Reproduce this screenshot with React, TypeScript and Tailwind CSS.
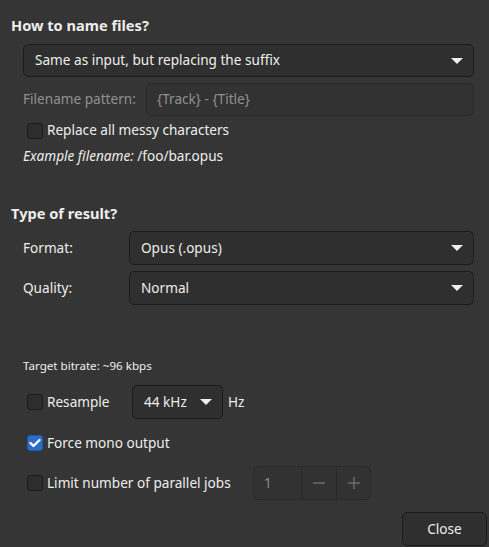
import React from "react";

const Arrow = () => (
  <svg width="12" height="6" viewBox="0 0 12 6" className="shrink-0">
    <path d="M0 0 L12 0 L6 6 Z" fill="#eeeeec" />
  </svg>
);

const Combo = ({ label, className }: { label: string; className: string }) => (
  <div
    className={`flex items-center justify-between rounded-[5px] border border-[#1b1b1b] bg-[#2f2f2f] pl-[11px] pr-[10px] ${className}`}
  >
    <span>{label}</span>
    <Arrow />
  </div>
);

const Check = ({ checked = false }: { checked?: boolean }) =>
  checked ? (
    <div className="flex h-[16px] w-[16px] shrink-0 items-center justify-center rounded-[3px] border border-[#1f5aa6] bg-[#2a6dcc]">
      <svg width="12" height="10" viewBox="0 0 12 10">
        <path d="M1.5 5 L4.5 8 L10.5 2" fill="none" stroke="#ffffff" strokeWidth="2.4" strokeLinecap="round" strokeLinejoin="round" />
      </svg>
    </div>
  ) : (
    <div className="h-[16px] w-[16px] shrink-0 rounded-[3px] border border-[#1b1b1b] bg-[#2d2d2d]" />
  );

export default function App() {
  return (
    <div
      className="relative h-[547px] w-[489px] overflow-hidden bg-[#353535] text-[13.6px] text-[#eeeeec]"
      style={{ fontFamily: '"Noto Sans", sans-serif' }}
    >
      <div className="flex flex-col">
        <div className="ml-[11px] mt-[15px] h-[20px] text-[14.6px] font-bold leading-[20px]">How to name files?</div>

        <Combo label="Same as input, but replacing the suffix" className="ml-[23px] mt-[9px] h-[33px] w-[451px]" />

        <div className="ml-[23px] mt-[6px] flex h-[33px] items-center">
          <span className="w-[123px] text-[#8f918f]">Filename pattern:</span>
          <div className="flex h-[33px] w-[328px] items-center rounded-[5px] border border-[#292929] bg-[#323232] pl-[10px] text-[#8f918f]">
            {"{Track} - {Title}"}
          </div>
        </div>

        <div className="ml-[27px] mt-[4px] flex h-[21px] items-center gap-[4px]">
          <Check />
          <span>Replace all messy characters</span>
        </div>

        <div className="ml-[23px] mt-[5px] h-[20px] leading-[20px]">
          <i>Example filename:</i> /foo/bar.opus
        </div>

        <div className="ml-[11px] mt-[37px] h-[20px] text-[14.6px] font-bold leading-[20px]">Type of result?</div>

        <div className="ml-[23px] mt-[8px] flex h-[34px] items-center">
          <span className="w-[106px]">Format:</span>
          <Combo label="Opus (.opus)" className="h-[34px] w-[345px]" />
        </div>

        <div className="ml-[23px] mt-[6px] flex h-[34px] items-center">
          <span className="w-[106px]">Quality:</span>
          <Combo label="Normal" className="h-[34px] w-[345px]" />
        </div>

        <div className="ml-[23px] mt-[53px] h-[16px] text-[11.6px] leading-[16px]">Target bitrate: ~96 kbps</div>

        <div className="ml-[27px] mt-[11px] flex h-[34px] items-center">
          <Check />
          <span className="ml-[4px] w-[85px]">Resample</span>
          <div className="flex h-[34px] w-[91px] items-center justify-between rounded-[5px] border border-[#1b1b1b] bg-[#2f2f2f] pl-[11px] pr-[10px]">
            <span>44 kHz</span>
            <Arrow />
          </div>
          <span className="ml-[5px]">Hz</span>
        </div>

        <div className="ml-[27px] mt-[14px] flex h-[20px] items-center gap-[4px]">
          <Check checked />
          <span>Force mono output</span>
        </div>

        <div className="ml-[27px] mt-[13px] flex h-[34px] items-center">
          <Check />
          <span className="ml-[4px] w-[206px]">Limit number of parallel jobs</span>
          <div className="flex h-[34px] w-[118px] items-stretch rounded-[5px] border border-[#292929] bg-[#323232] text-[#8a8c8a]">
            <div className="flex w-[47px] items-center pl-[10px]">1</div>
            <div className="flex w-[35px] items-center justify-center border-l border-[#292929]">
              <svg width="16" height="16" viewBox="0 0 16 16">
                <path d="M2 8 H14" stroke="#6a6c6a" strokeWidth="1.5" />
              </svg>
            </div>
            <div className="flex flex-1 items-center justify-center border-l border-[#292929]">
              <svg width="16" height="16" viewBox="0 0 16 16">
                <path d="M2 8 H14 M8 2 V14" stroke="#6a6c6a" strokeWidth="1.5" />
              </svg>
            </div>
          </div>
        </div>

        <div className="mt-[12px] flex justify-end pr-[2px]">
          <div className="flex h-[34px] w-[85px] items-center justify-center rounded-[5px] border border-[#1b1b1b] bg-[#2f2f2f]">
            Close
          </div>
        </div>
      </div>
    </div>
  );
}
